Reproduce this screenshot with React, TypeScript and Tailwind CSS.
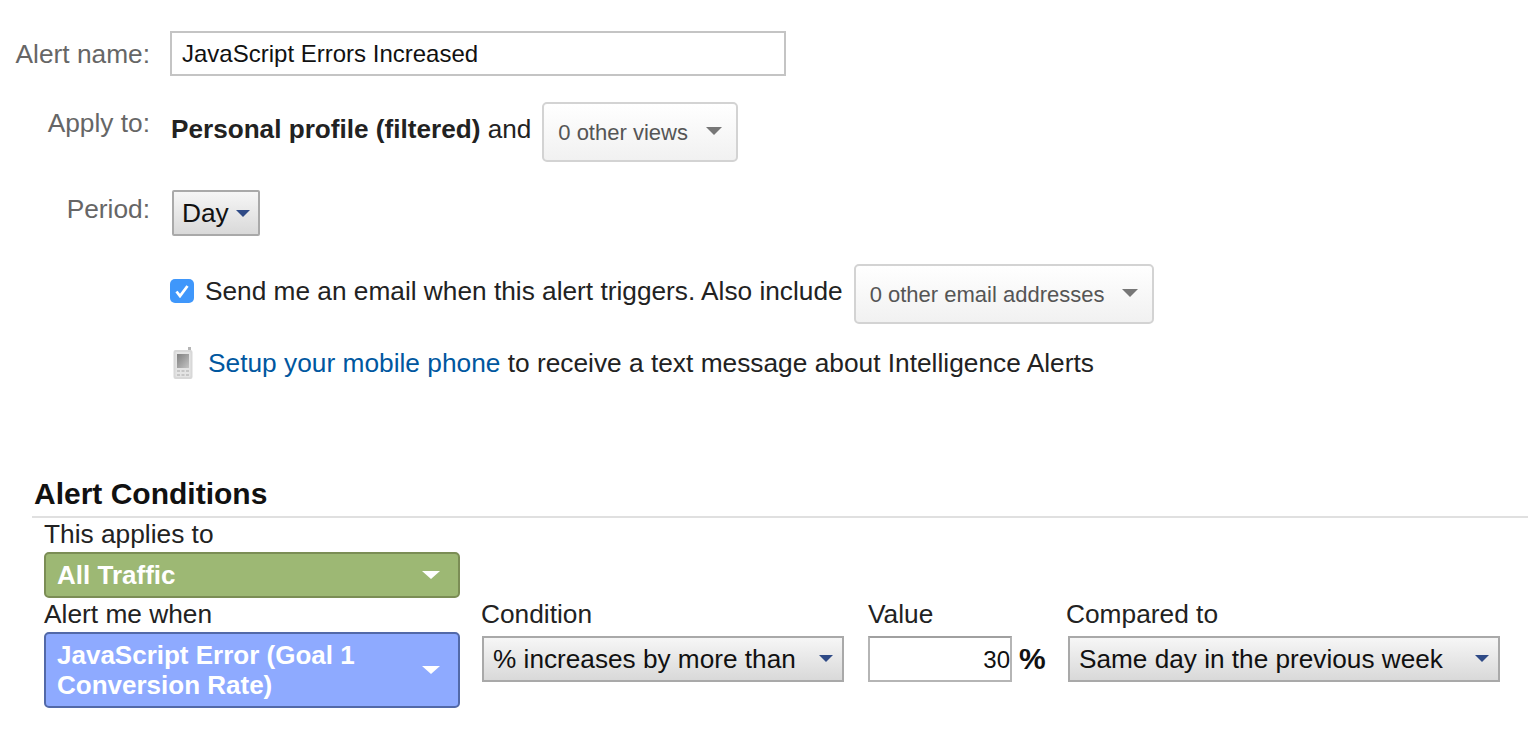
const font = "font-['Liberation_Sans',Arial,sans-serif]";

function Caret({ className }: { className: string }) {
  return <span className={`h-0 w-0 border-x-[7px] border-t-[7px] border-x-transparent ${className}`} />;
}

function LightDropdown({ label, width }: { label: string; width: string }) {
  return (
    <div className={`flex h-[60px] items-center justify-between rounded-[5px] border-2 border-[#d3d3d3] bg-gradient-to-b from-white to-[#f1f1f1] pl-[14px] pr-[14px] text-[22px] text-[#555] ${width}`}>
      <span className="mt-[1px]">{label}</span>
      <Caret className="-mt-[2px] border-x-[8px] border-t-[8px] border-t-[#777]" />
    </div>
  );
}

function GrayDropdown({ label, width }: { label: string; width: string }) {
  return (
    <div className={`flex h-[46px] items-center justify-between border-2 border-[#a9a9a9] bg-gradient-to-b from-[#f6f6f6] to-[#d9d9d9] pl-[9px] pr-[9px] text-[26.2px] text-[#111] ${width}`}>
      <span className="-mt-[1px]">{label}</span>
      <Caret className="-mt-[2px] border-t-[#2f4a86]" />
    </div>
  );
}

function PhoneIcon() {
  return (
    <svg width="20" height="32" viewBox="0 0 20 32" className="shrink-0">
      <defs>
        <linearGradient id="phone-screen" x1="0" y1="0" x2="1" y2="1">
          <stop offset="0" stopColor="#7f7f7f" />
          <stop offset="1" stopColor="#c4c4c4" />
        </linearGradient>
      </defs>
      <rect x="15" y="0" width="3" height="5" fill="#b5b5b5" />
      <rect x="0.5" y="3" width="19" height="29" rx="2" fill="#d8d8d8" />
      <rect x="2.5" y="5" width="15" height="25" rx="1" fill="#e4e4e4" />
      <rect x="4" y="7" width="12" height="14" fill="url(#phone-screen)" />
      <g fill="#c6c6c6">
        <rect x="4" y="23" width="3" height="2" />
        <rect x="8.5" y="23" width="3" height="2" />
        <rect x="13" y="23" width="3" height="2" />
        <rect x="4" y="27" width="3" height="2" />
        <rect x="8.5" y="27" width="3" height="2" />
        <rect x="13" y="27" width="3" height="2" />
      </g>
    </svg>
  );
}

export default function App() {
  return (
    <div className={`${font} h-[740px] w-[1528px] overflow-hidden bg-white pt-[31px] text-[26.3px] leading-[30px] text-[#222]`}>
      <div className="flex h-[45px] items-center">
        <div className="w-[150px] text-right text-[#666]">Alert name:</div>
        <div className="ml-5 flex h-[45px] w-[616px] items-center border-2 border-[#c4c4c4] pl-[10px] text-[24px] text-[#111]">
          JavaScript Errors Increased
        </div>
      </div>

      <div className="mt-[26px] flex h-[60px] items-start">
        <div className="mt-[6px] w-[150px] text-right text-[#666]">Apply to:</div>
        <div className="ml-[21px] mt-[12px] text-[26.15px]">
          <b>Personal profile (filtered)</b> and
        </div>
        <div className="ml-[11px]">
          <LightDropdown label="0 other views" width="w-[196px]" />
        </div>
      </div>

      <div className="mt-[28px] flex h-[46px] items-start">
        <div className="mt-1 w-[150px] text-right text-[#666]">Period:</div>
        <div className="ml-[22px] flex h-[46px] w-[88px] items-center justify-between rounded-[2px] border-2 border-[#a9a9a9] bg-gradient-to-b from-[#f6f6f6] to-[#d9d9d9] pl-2 pr-[8px] text-[#111]">
          <span>Day</span>
          <Caret className="border-t-[#2f4a86]" />
        </div>
      </div>

      <div className="ml-[170px] mt-[28px] flex h-[60px] items-center">
        <div className="-mt-[6px] flex h-6 w-6 items-center justify-center rounded-[5px] bg-[#3f97fb]">
          <svg width="16" height="14" viewBox="0 0 16 14" fill="none">
            <path d="M2.5 7.5 L6 12 L13.5 2" stroke="white" strokeWidth="2.8" />
          </svg>
        </div>
        <span className="ml-[11px] -mt-[6px] text-[26.25px]">Send me an email when this alert triggers. Also include</span>
        <div className="ml-[11px]">
          <LightDropdown label="0 other email addresses" width="w-[300px]" />
        </div>
      </div>

      <div className="ml-[173px] mt-[23px] flex h-[32px] items-center">
        <PhoneIcon />
        <span className="ml-[15px]">
          <span className="text-[#00579f]">Setup your mobile phone</span> to receive a text message about Intelligence Alerts
        </span>
      </div>

      <div className="ml-[34px] mt-[98px] text-[30px] font-bold leading-[34px] text-[#111]">Alert Conditions</div>
      <div className="ml-[32px] mt-[5px] border-t-2 border-[#e0e0e0]" />

      <div className="ml-[44px] mt-[1px]">
        <div className="h-[33px]">This applies to</div>
        <div className="flex h-[46px] w-[416px] items-center justify-between rounded-[5px] border-2 border-[#7b8d55] bg-[#9db874] pl-[11px] pr-[18px] text-[26px] font-bold text-white">
          <span>All Traffic</span>
          <Caret className="border-x-[9px] border-t-[8px] border-t-white" />
        </div>

        <div className="mt-[1px] flex items-start">
          <div className="w-[416px]">
            <div className="h-[33px]">Alert me when</div>
            <div className="flex h-[76px] items-center justify-between rounded-[5px] border-2 border-[#5269a8] bg-[#8eaaff] pl-[11px] pr-[18px] text-[26px] font-bold text-white">
              <span className="leading-[30px]">
                JavaScript Error (Goal 1
                <br />
                Conversion Rate)
              </span>
              <Caret className="border-x-[9px] border-t-[8px] border-t-white" />
            </div>
          </div>

          <div className="ml-[22px] w-[362px]">
            <div className="-ml-px h-[37px]">Condition</div>
            <GrayDropdown label="% increases by more than" width="w-[362px]" />
          </div>

          <div className="ml-[24px] w-[200px]">
            <div className="h-[37px]">Value</div>
            <div className="flex items-center">
              <div className="flex h-[46px] w-[144px] items-center justify-end border-2 border-[#b5b5b5] border-t-[#a0a0a0] pt-[2px] text-[24px] text-[#111]">30</div>
              <span className="ml-[7px] text-[30px] font-bold text-[#111]">%</span>
            </div>
          </div>

          <div>
            <div className="-ml-[2px] h-[37px]">Compared to</div>
            <GrayDropdown label="Same day in the previous week" width="w-[432px]" />
          </div>
        </div>
      </div>
    </div>
  );
}
